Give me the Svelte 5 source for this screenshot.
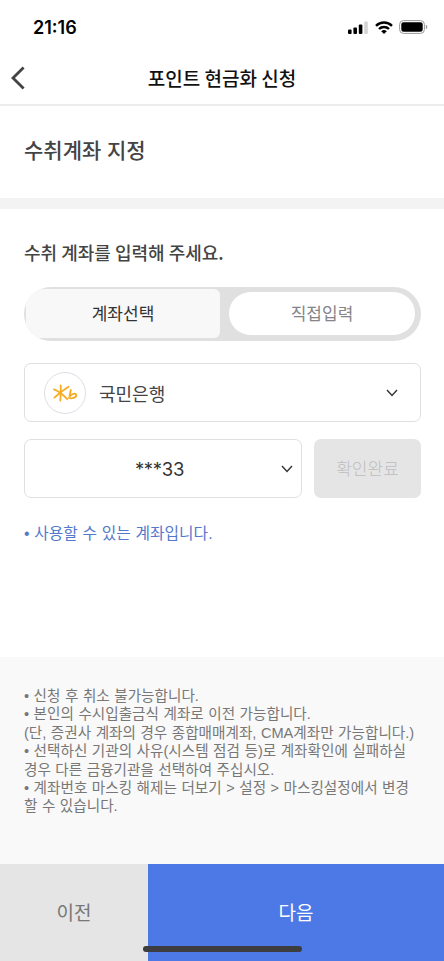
<script lang="ts">
  let mode = $state<'select' | 'direct'>('select');

  const notes = [
    ['• 신청 후 취소 불가능합니다.'],
    ['• 본인의 수시입출금식 계좌로 이전 가능합니다.', '(단, 증권사 계좌의 경우 종합매매계좌, CMA계좌만 가능합니다.)'],
    ['• 선택하신 기관의 사유(시스템 점검 등)로 계좌확인에 실패하실', '경우 다른 금융기관을 선택하여 주십시오.'],
    ['• 계좌번호 마스킹 해제는 더보기 > 설정 > 마스킹설정에서 변경', '할 수 있습니다.'],
  ];
</script>

{#snippet chevron()}
  <svg class="chevron" width="12" height="8" viewBox="0 0 12 8" aria-hidden="true">
    <path d="M1 1l5 5.5L11 1" fill="none" stroke="#333" stroke-width="1.4" />
  </svg>
{/snippet}

<div class="screen">
  <div class="status-bar">
    <span class="time">21:16</span>
    <div class="status-icons">
      <svg width="20" height="13" viewBox="0 0 20 13" aria-hidden="true">
        <rect x="0" y="8.5" width="3.6" height="4.5" rx="1" />
        <rect x="5.4" y="6.4" width="3.6" height="6.6" rx="1" />
        <rect x="10.8" y="3.6" width="3.6" height="9.4" rx="1" />
        <rect x="16.2" y="0.5" width="3.6" height="12.5" rx="1" fill="#d4d4d4" />
      </svg>
      <svg class="wifi" width="18" height="13" viewBox="0 0 18 13" aria-hidden="true">
        <g fill="none" stroke="#000" stroke-width="2.4">
          <path d="M1 4.8a11.4 11.4 0 0 1 16 0" />
          <path d="M4 8a7.1 7.1 0 0 1 10 0" />
        </g>
        <path d="M6.2 10.3a4 4 0 0 1 5.6 0L9 13z" />
      </svg>
      <svg width="29" height="14" viewBox="0 0 29 14" aria-hidden="true">
        <rect x="0.6" y="0.6" width="24.8" height="12.8" rx="3.8" fill="none" stroke="#999" stroke-width="1" />
        <rect x="2.3" y="2.3" width="21.4" height="9.4" rx="2.2" />
        <path d="M26.8 4.8q1.6.6 1.6 2.2t-1.6 2.2z" fill="#999" />
      </svg>
    </div>
  </div>

  <header class="nav-bar">
    <button class="back" aria-label="뒤로">
      <svg width="14" height="24" viewBox="0 0 14 24" aria-hidden="true">
        <path d="M12.6 1.6L2 12l10.6 10.4" fill="none" stroke="#444" stroke-width="2.8" />
      </svg>
    </button>
    <h1>포인트 현금화 신청</h1>
  </header>

  <section class="page-title">
    <h2>수취계좌 지정</h2>
  </section>

  <main class="form">
    <h3>수취 계좌를 입력해 주세요.</h3>

    <div class="tabs">
      <button class="tab tab-select" class:active={mode === 'select'} onclick={() => (mode = 'select')}>계좌선택</button>
      <button class="tab tab-direct" class:active={mode === 'direct'} onclick={() => (mode = 'direct')}>직접입력</button>
    </div>

    <button class="field bank">
      <span class="bank-logo">
        <svg width="26" height="20" viewBox="0 0 26 20" aria-hidden="true">
          <g fill="none" stroke="#f8ab20" stroke-width="1.8" stroke-linecap="round">
            <path d="M2 6.4C6.5 8.2 11.5 12 15.2 16.2" />
            <path d="M8.6 2.4C8.9 7 8.7 12 8.3 17.6" />
            <path d="M16.6 3.8C12 6.6 7 10.5 2.4 14.6" />
            <path d="M18.8 7L17.4 14C19 10.4 24.2 9.6 24.2 12.2C24.2 14.8 20 15.8 16.8 15" />
          </g>
        </svg>
      </span>
      <span class="bank-name">국민은행</span>
      {@render chevron()}
    </button>

    <div class="account-row">
      <button class="field account">
        <span class="account-number">***33</span>
        {@render chevron()}
      </button>
      <button class="verify" disabled>확인완료</button>
    </div>

    <p class="result">• 사용할 수 있는 계좌입니다.</p>
  </main>

  <ul class="notes">
    {#each notes as lines}
      <li>
        {#each lines as line}
          <span>{line}</span>
        {/each}
      </li>
    {/each}
  </ul>

  <footer class="actions">
    <button class="prev">이전</button>
    <button class="next">다음</button>
    <div class="home-indicator"></div>
  </footer>
</div>

<style>
  :global(body) {
    background: #fff;
  }

  .screen {
    display: flex;
    flex-direction: column;
    width: 444px;
    height: 961px;
    overflow: hidden;
    background: #fff;
    color: #444;
    font-family: 'Noto Sans CJK KR', sans-serif;
  }

  .screen * {
    box-sizing: border-box;
  }

  button {
    padding: 0;
    border: 0;
    background: none;
    color: inherit;
    font: inherit;
  }

  h1,
  h2,
  h3,
  p,
  ul {
    margin: 0;
    padding: 0;
  }

  svg {
    display: block;
    flex: none;
  }

  .status-bar {
    display: flex;
    align-items: center;
    justify-content: space-between;
    flex: none;
    height: 54px;
    padding: 0 16px 0 33px;
  }

  .time {
    padding-top: 1px;
    color: #000;
    font: 600 18px/24px Inter, sans-serif;
  }

  .status-icons {
    display: flex;
    align-items: center;
  }

  .wifi {
    margin: 0 6px 0 7px;
  }

  .nav-bar {
    display: grid;
    grid-template-columns: 60px 1fr 60px;
    align-items: center;
    flex: none;
    height: 52px;
    padding-bottom: 2px;
    border-bottom: 2px solid #ececec;
  }

  .back {
    padding-left: 11px;
  }

  h1 {
    color: #111;
    font-size: 19px;
    font-weight: 500;
    line-height: 28px;
    text-align: center;
    white-space: nowrap;
  }

  .page-title {
    flex: none;
    height: 103px;
    padding: 28px 24px 0;
    border-bottom: 11px solid #f3f3f3;
  }

  h2 {
    font-size: 21px;
    font-weight: 500;
    line-height: 30px;
    word-spacing: 1px;
  }

  .form {
    flex: none;
    height: 448px;
    padding: 30px 23px 0 24px;
  }

  h3 {
    font-size: 18px;
    font-weight: 500;
    line-height: 26px;
  }

  .tabs {
    display: flex;
    justify-content: space-between;
    height: 54px;
    margin-top: 22px;
    padding: 2px 6px 3px 2px;
    overflow: hidden;
    border-radius: 27px;
    background: #e0e0e0;
  }

  .tab {
    padding-bottom: 1px;
    color: #85858b;
    font-size: 17px;
    line-height: 24px;
  }

  .tab.active {
    color: #333;
  }

  .tab-select {
    width: 194px;
    border-radius: 6px;
    background: #f8f8f8;
  }

  .tab-direct {
    width: 186px;
    height: 43px;
    margin-top: 3px;
    border-radius: 22px;
    background: #fff;
  }

  .field {
    display: flex;
    align-items: center;
    height: 59px;
    border: 1.5px solid #dfdfe3;
    border-radius: 7px;
    background: #fff;
  }

  .bank {
    width: 100%;
    margin-top: 22px;
    padding: 0 22px 0 19px;
  }

  .bank-logo {
    display: flex;
    align-items: center;
    justify-content: center;
    width: 42px;
    height: 42px;
    border: 1px solid #dedee6;
    border-radius: 50%;
  }

  .bank-name {
    flex: 1;
    margin-left: 13px;
    font-size: 18px;
    text-align: left;
  }

  .account-row {
    display: flex;
    gap: 12px;
    margin-top: 17px;
  }

  .account {
    flex: 1;
    padding: 0 8px 0 13px;
  }

  .account-number {
    flex: 1;
    color: #333;
    font: 400 18.5px/26px Inter, sans-serif;
    letter-spacing: -0.3px;
    text-align: center;
  }

  .verify {
    width: 107px;
    padding-bottom: 2px;
    border-radius: 7px;
    background: #e5e5e5;
    color: #bdbdc0;
    font-size: 17px;
    font-weight: 300;
  }

  .result {
    margin-top: 24px;
    color: #5578cc;
    font-family: 'Liberation Sans', 'Noto Sans CJK KR', sans-serif;
    font-size: 15.8px;
    line-height: 24px;
    word-spacing: 0.3px;
  }

  .notes {
    flex: 1;
    padding: 30px 24px 0;
    background: #f9f9f9;
    color: #777;
    font-family: 'Liberation Sans', 'Noto Sans CJK KR', sans-serif;
    font-size: 14.6px;
    line-height: 18.4px;
    list-style: none;
    white-space: nowrap;
    word-spacing: 0.45px;
  }

  .notes span {
    display: block;
  }

  .actions {
    display: flex;
    position: relative;
    flex: none;
    height: 97px;
    font-size: 19px;
  }

  .prev,
  .next {
    padding-bottom: 2px;
  }

  .prev {
    width: 148px;
    background: #e5e5e5;
    color: #777;
  }

  .next {
    flex: 1;
    background: #4d79e6;
    color: #fff;
  }

  .home-indicator {
    position: absolute;
    bottom: 9px;
    left: 143px;
    width: 159px;
    height: 6px;
    border-radius: 3px;
    background: #3d3d40;
  }
</style>
